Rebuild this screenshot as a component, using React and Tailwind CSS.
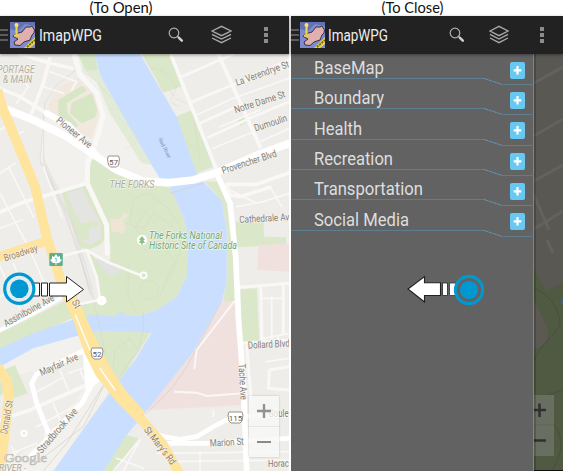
import React from "react";

const menu = [
  { label: "BaseMap", width: 70 },
  { label: "Boundary", width: 70 },
  { label: "Health", width: 48 },
  { label: "Recreation", width: 79 },
  { label: "Transportation", width: 109 },
  { label: "Social Media", width: 95 },
];

function AppIcon() {
  return (
    <svg className="h-[26px] w-[25px] shrink-0" viewBox="0 0 25 26" preserveAspectRatio="none">
      <rect width="25" height="26" fill="#7f8bd0" />
      <path d="M0 0H25V4L15 2L8 9L0 7Z" fill="#6272b4" />
      <path d="M5 23L4 20L8 17L3 14.5L5 12L12 10L16 5L20 5L22 4L24.5 8L24 11L22 13L20 18L14 20L10 23.5Z" fill="#dfb0ae" stroke="#2a2733" strokeWidth=".9" />
      <path d="M6.5 3V14" stroke="#f0d348" strokeWidth="2.2" />
      <circle cx="6.5" cy="3" r="2" fill="#ffe458" />
      <path d="M4 13.6H9" stroke="#e6cb4c" strokeWidth="2" />
      <path d="M14 26L25 15V22L20 26Z" fill="#e6d43a" />
      <path d="M17 25L25 18" stroke="#665d21" strokeWidth="1.7" strokeDasharray="2 1" />
    </svg>
  );
}

function Header({ compact }) {
  return (
    <header className="relative z-10 flex h-[38px] shrink-0 items-center bg-[#222] shadow-[0_1px_3px_#0006]">
      <div className={compact ? "flex w-[9px] flex-col gap-[3px]" : "flex w-[10px] flex-col gap-[3px]"}>
        <i className="h-[2px] w-[8px] bg-[#5c5c5c]" />
        <i className="h-[2px] w-[8px] bg-[#5c5c5c]" />
        <i className="h-[2px] w-[8px] bg-[#5c5c5c]" />
      </div>
      <AppIcon />
      <svg className={compact ? "ml-[3px] h-[30px] w-[62px] overflow-visible" : "ml-[4px] h-[30px] w-[66px] overflow-visible"}>
        <text x="0" y="21" textLength={compact ? 60 : 63} lengthAdjust="spacingAndGlyphs" fill="#eee" className="font-['Roboto',sans-serif] text-[16px]">ImapWPG</text>
      </svg>
      <svg className={compact ? "ml-[59px] h-[16px] w-[16px]" : "ml-[63px] h-[16px] w-[16px]"} viewBox="0 0 16 16" fill="none">
        <circle cx="6" cy="6" r="4.8" stroke="#b0b0b0" strokeWidth="1.2" />
        <path d="M9.3 9.2L10.8 10.6" stroke="#bdbdbd" strokeWidth="1.5" />
        <path d="M11 10.9L13.8 13.6" stroke="#cfcfcf" strokeWidth="2.6" strokeLinecap="round" />
      </svg>
      <svg className={compact ? "ml-[24px] h-[20px] w-[20px]" : "ml-[27px] h-[20px] w-[21px]"} viewBox="0 0 20 20" preserveAspectRatio="none" fill="none" stroke="#a9a9a9" strokeWidth="1.4">
        <path d="M1 6L10 1.3L19 6L10 10.7Z" />
        <path d="M1 9.3L10 14L19 9.3M1 13L10 17.7L19 13" />
      </svg>
      <div className={compact ? "ml-[31px] flex flex-col gap-[2px]" : "ml-[32px] flex flex-col gap-[2px]"}>
        <i className="h-[4px] w-[4px] bg-[#8c8c8c]" />
        <i className="h-[4px] w-[4px] bg-[#8c8c8c]" />
        <i className="h-[4px] w-[4px] bg-[#8c8c8c]" />
      </div>
    </header>
  );
}

function Label({ x, y, w, a = 0, children, size = 10, fill = "#827e7a", italic = false }) {
  return (
    <text x={x} y={y} textLength={w} lengthAdjust="spacingAndGlyphs" transform={`rotate(${a} ${x} ${y})`} fontSize={size} fill={fill} fontStyle={italic ? "italic" : "normal"} stroke="#f8f6f0" strokeWidth="1.6" strokeOpacity=".8" paintOrder="stroke" strokeLinejoin="round">{children}</text>
  );
}

function Shield({ x, y, w = 12, n }) {
  return (
    <g>
      <path d={`M${x + 1} ${y}H${x + w - 1}L${x + w} ${y + 3}L${x + w - 1} ${y + 9}L${x + w - 3} ${y + 11}H${x + 3}L${x + 1} ${y + 9}L${x} ${y + 3}Z`} fill="#fff" stroke="#8a8784" strokeWidth=".9" />
      <text x={x + w / 2} y={y + 8.5} textAnchor="middle" fontSize="8" fill="#5c5956">{n}</text>
    </g>
  );
}

function Terrain() {
  return (
    <g>
      <path d="M225 12H285L365 190L480 385L430 395L290 320L262 340V400L190 425L120 330L125 210L190 100L240 75Z" fill="#f3f1ed" />
      <path d="M0 895L230 780L330 1020L160 1263H0V1250L150 1160L270 990L250 900L110 960L0 990Z" fill="#f3f1ed" />
      <path d="M145 165L175 110L240 75L285 130L300 190L275 268L150 200Z" fill="#f1e9df" />
      <path d="M235 12H285L300 75L455 345L425 340L330 190L290 95L250 60Z" fill="#e1ebd6" />
      <path d="M235 12H285L292 60L260 62Z" fill="#d7e6c6" />
      <path d="M175 150L245 107L262 120L200 160L203 190L235 225L220 240L175 195Z M215 158L275 130L292 180L285 203L245 220L210 190Z" fill="#d7e6c4" />
      <path d="M262 400L275 330L310 320L350 355L430 400L510 412L550 500L565 560L560 680L530 740L470 780L420 797L215 810L240 765L300 752L290 680L262 600L240 590L185 430Z" fill="#dbe7c9" />
      <path d="M320 560L332 590L330 638L300 640L285 625L262 600L300 585Z" fill="#efeee9" />
      <path d="M200 430L247 415L265 455L300 515L303 565L270 585L253 575L245 525L225 490Z" fill="#e4e4e3" />
      <path d="M243 520L295 512L295 530L268 533V565L253 568Z" fill="#dbe7c9" />
      <path d="M330 505L358 508L372 490L387 492L370 515L378 535L370 550L335 543Z" fill="#efe5d6" />
      <path d="M285 625L362 645L350 678L325 675Z" fill="#e2e2e2" />
      <path d="M425 12H508L545 110L490 128L462 75Z M525 198L575 180L640 350L590 370Z" fill="#dbe7c9" />
      <path d="M490 128L545 110L575 180L527 200Z" fill="#f0eee9" />
      <path d="M615 395L655 395L690 480L705 560V755H668L680 700V540L665 450Z" fill="#dbe7c9" />
      <path d="M708 515H790L792 560L858 562V583L708 592Z M722 718L770 715L778 875L725 880Z M715 208L745 198V215L720 228Z" fill="#dbe7c9" />
      <path d="M0 850L210 745L240 795L0 900Z M270 842H455L350 1010L300 920Z M10 960L45 945L82 1030L40 1045ZM0 990L18 1018L0 1040Z M380 1155L415 1165L345 1263H300Z" fill="#dbe7c9" />
      <path d="M775 585L868 580V665L772 660Z M668 755H705L735 1065L440 1080L580 905Z" fill="#f0e1df" />
      <path d="M285 12L300 75L365 190L455 345L480 385L510 412L550 500L565 560L560 680L530 740L470 780L420 797H375L372 790L360 785L345 800L290 793L215 810L100 850L0 895V950L100 895L230 858L300 843L455 848L405 930L335 1020L160 1263H310L380 1155L435 1090L580 905L665 755L680 700V540L665 450L615 400L590 370L530 200L420 12Z" fill="#cadfff" />
    </g>
  );
}

function Paths() {
  return (
    <g fill="none" strokeWidth="2">
      <path d="M235 55L170 105L135 160L120 330L190 480L285 752M131 180V335L200 500L278 745M128 320L210 500L270 735M122 338L220 520L268 720M130 340L232 560L278 720" stroke="#dddbd8" />
      <path d="M235 55L285 90L335 145" stroke="#dedbd6" />
      <path d="M325 180C360 160 390 210 410 240C430 270 410 285 375 295M345 195L405 245L385 270" stroke="#e0ddd4" strokeDasharray="5 3" />
      <path d="M280 755L305 850L325 980M430 790V840L415 900L350 990M340 950L345 900L390 865L415 900" stroke="#cdd5c0" strokeDasharray="6 3" />
      <path d="M390 520L400 450L440 430L500 470L540 530V610L510 660L480 740M380 520L430 535L460 490L520 530M430 600L490 590L530 640L500 700M385 640V740L410 790M420 720A25 25 0 1 0 475 720A25 25 0 1 0 420 720M440 480L405 530L430 570M500 590L530 560" stroke="#ced9bf" strokeDasharray="6 3" />
      <path d="M510 430L610 400M665 755L560 950L520 1010L440 1090M320 990L200 1180L130 1263M310 1010L250 1130L120 1230" stroke="#d5cdca" />
      <path d="M450 50L500 70L530 110L510 155L540 170M580 200L600 330M555 270L590 300M510 120L525 145L560 160" stroke="#d6d5c6" strokeDasharray="5 3" />
    </g>
  );
}

function Roads() {
  return (
    <g fill="none" strokeLinejoin="round" strokeLinecap="round">
      <g stroke="#f9f8f7" strokeWidth="5">
        <path d="M50 160L85 110L60 75M150 65L230 95L215 120M130 110L190 130M0 370L45 340M0 430L90 600L150 740M25 350L100 500M0 535L65 510M0 240L30 225M45 255L70 245M130 350L185 500M0 650L60 780M40 640L85 750M0 740L40 720" />
        <path d="M590 195L700 145L868 85M660 230L780 180M640 295L760 245M780 275L868 235M720 100L868 50M710 470L790 455L868 430M690 420L770 460M810 410L845 470M785 745H850M815 740V865M790 865L868 850M835 860V880M800 935L868 925" />
        <path d="M180 960L205 1020M110 1025L185 985M110 1130L240 1060M135 1150L165 1135M160 1060L180 1110M240 960L262 1010M205 970L260 950M20 1215L110 1180M35 1190L50 1225M0 1240L60 1200M70 1230L130 1190L140 1130" />
        <path d="M410 1180L340 1263M420 1170L370 1263M470 1210L868 1205M500 1235L868 1230M600 1205V1263M640 1100V1080M350 1225L430 1255" />
      </g>
      <g stroke="#f9f8f7" strokeWidth="11">
        <path d="M0 115L60 140L140 190M150 25L130 100L95 190M60 12L150 40L215 55" />
        <path d="M222 12L240 75L290 130L310 200L280 300L262 340V400L320 525L322 610" strokeWidth="15" />
        <path d="M0 487L60 460L262 400" />
        <path d="M190 617L260 600L320 635L420 675M260 600L290 680L300 750L240 762" strokeWidth="8" />
        <path d="M515 20L650 360M655 12L780 290" />
        <path d="M545 80L700 12M570 158L720 95L868 30M600 220L720 165M625 262L760 200L868 155" strokeWidth="8" />
        <path d="M680 403H770L868 368M680 405L690 435L720 440L810 412" />
        <path d="M720 712L868 700M782 712L786 880M850 708V850M720 880L868 870M868 950L808 960L805 1015L868 1020M740 890L755 1060" strokeWidth="9" />
        <path d="M702 755L590 900L583 955M525 1025L590 1028L620 1038L730 1030" strokeWidth="6" />
        <path d="M45 1095L90 1080L260 1005M0 1110L45 1095" />
      </g>
      <g stroke="#fff">
        <path d="M140 190L205 225L290 315" strokeWidth="19" />
        <path d="M0 170L100 210L200 260L290 320L350 360L430 394L510 398L580 390L650 368L760 320L868 280" strokeWidth="23" />
        <path d="M650 370L690 460L707 620L715 800L730 1000L740 1263" strokeWidth="17" />
        <path d="M440 1140L490 1160L540 1168L590 1160L640 1130L700 1100L868 1095M470 1180H620L868 1165" strokeWidth="14" />
        <path d="M255 900L110 972L95 1000L110 1060L150 1160M285 985L245 1060L150 1160L90 1220" strokeWidth="15" />
        <path d="M250 890L300 990L260 1020Z" fill="#fff" strokeWidth="6" />
        <path d="M0 840L100 790L180 745" strokeWidth="12" />
      </g>
      <g stroke="#fee49c" strokeLinecap="butt">
        <path d="M-8 120L10 180L50 275L105 410L140 560L185 700L235 810L265 900L300 970L360 1045L430 1115L490 1185L540 1275" strokeWidth="29" />
        <path d="M195 690L242 790L285 885L330 970L375 1035L430 1095" strokeWidth="20" />
        <path d="M-5 621L130 576" strokeWidth="27" />
        <path d="M-8 950L20 990L27 1040L10 1180L2 1265" strokeWidth="30" />
      </g>
      <path d="M226 795L270 900M300 955L345 1020" stroke="#fff" strokeWidth="4" />
      <circle cx="431" cy="676" r="9" stroke="#fff" strokeWidth="5" />
      <circle cx="305" cy="752" r="8" stroke="#fff" strokeWidth="13" />
      <circle cx="72" cy="1150" r="8" stroke="#fff" strokeWidth="6" />
    </g>
  );
}

function CityMap() {
  return (
    <svg className="block h-[417px] w-[289px] font-['Roboto',sans-serif]" viewBox="0 54 289 417">
      <rect y="54" width="289" height="417" fill="#eeede9" />
      <g transform="translate(0 50) scale(.33333)">
        <Terrain />
        <Paths />
        <Roads />
      </g>

      <Label x={-3} y={72.5} w={38} italic fill="#b3ada0">PORTAGE</Label>
      <Label x={3} y={82.8} w={29} italic fill="#b3ada0">&amp; MAIN</Label>
      <Label x={55.5} y={121.5} w={43} a={39}>Pioneer Ave</Label>
      <Label x={109.5} y={188} w={45} italic size={10} fill="#b1ac9c">THE FORKS</Label>
      <Label x={149} y={238.8} w={73} italic fill="#6dab76">The Forks National</Label>
      <Label x={149} y={249.2} w={88} italic fill="#6dab76">Historic Site of Canada</Label>
      <circle cx="142" cy="240" r="5.2" fill="white" />
      <path d="M142 236L145 240H143.4L145 243H142.8V244.5H141.2V243H139L140.6 240H139Z" fill="#8cbf83" />
      <text x="158" y="139" transform="rotate(63 158 139)" fontSize="5.5" textLength="22" fill="#8293b5">Red River</text>
      <Label x={237} y={86} w={56} a={-20}>La Verendrye St</Label>
      <Label x={235.5} y={113.3} w={53} a={-18}>Notre Dame St</Label>
      <Label x={255.5} y={131.5} w={34} a={-18}>Dumoulin</Label>
      <Label x={223} y={174} w={57} a={-18}>Provencher Blvd</Label>
      <Label x={239.5} y={223} w={50} a={-3}>Cathedrale Av</Label>
      <Label x={248} y={348.8} w={42} a={-3}>Dollard Blvd</Label>
      <Label x={5} y={261.5} w={35} a={-18} fill="#9b8564">Broadway</Label>
      <Label x={6} y={327} w={56} a={-29}>Assiniboine Ave</Label>
      <Label x={41.5} y={376} w={41} a={-24}>Mayfair Ave</Label>
      <Label x={41.5} y={454} w={56} a={-49}>Stradbrook Ave</Label>
      <Label x={7} y={434.5} w={34} a={-80} fill="#9b8564">Donald St</Label>
      <Label x={71.5} y={301.5} w={9} a={64} fill="#9b8564">St</Label>
      <Label x={143.5} y={430} w={45} a={52} fill="#8f7c5e">St Mary's Rd</Label>
      <Label x={238.5} y={364} w={36} a={87}>Tache Ave</Label>
      <Label x={210} y={446.5} w={34} a={-3}>Marion St</Label>
      <Label x={268.5} y={417} w={20}>Goule</Label>
      <Label x={268} y={467} w={21} a={-1}>Horac</Label>
      <Shield x={107.5} y={156} n="57" />
      <Shield x={91} y={348} n="52" />
      <Shield x={228} y={412} w={15} n="115" />
      <rect x="49.3" y="253" width="13.5" height="13" rx="1" fill="#5fae92" />
      <path d="M56 254L58 257L60 256V259L62 260L59 263H56.5V265H55.5V263H53L50 260L52 259V256L54 257Z" fill="white" />
      <text x="56" y="262" textAnchor="middle" fontSize="6" fill="#4d987b">1</text>
      <text x="4" y="461.5" textLength="43" lengthAdjust="spacingAndGlyphs" fontSize="13.5" fontFamily="Liberation Serif, serif" fill="#eeeeeb" stroke="#bdbbb7" strokeWidth=".7">Google</text>
      <Label x={-1} y={470.5} w={27} italic size={9.5} fill="#aaa296">RIVER -</Label>
    </svg>
  );
}

function SwipeRight() {
  return (
    <svg className="absolute left-[2px] top-[271px] h-[36px] w-[84px]" viewBox="2 271 84 36">
      <path d="M32 283H39.5V296H32ZM41.5 283H47.5V296H41.5ZM49.5 283H66.5V276.5L83.5 289.5L66.5 302V296H49.5Z" fill="white" stroke="#222" strokeWidth="1" />
      <circle cx="19.3" cy="288.8" r="14.6" fill="#e4eef0" stroke="#0098d0" strokeWidth="3.2" />
      <circle cx="19.3" cy="288.8" r="9.3" fill="#0098d0" />
    </svg>
  );
}

function SwipeLeft() {
  return (
    <svg className="absolute left-[115px] top-[272px] h-[36px] w-[80px]" viewBox="406 272 80 36">
      <path d="M408 289L424.5 276.5V282.7H440.5V295.5H424.5V302Z" fill="white" stroke="#222" strokeWidth="1.1" />
      <path d="M442.5 283H447.5V295.5H442.5Z" fill="white" stroke="#222" strokeWidth=".8" />
      <path d="M449.5 283H456V295.5H449.5Z" fill="white" stroke="#333" strokeWidth=".8" />
      <circle cx="469" cy="290" r="13.6" fill="#626262" stroke="#0098d0" strokeWidth="3.1" />
      <circle cx="469" cy="290" r="9.1" fill="#0098d0" />
    </svg>
  );
}

function MenuRow({ label, width }) {
  return (
    <div className="relative flex h-[30.35px] shrink-0 justify-between pl-[23px] pr-[8px]">
      <svg className="absolute left-0 top-[23px] h-[9px] w-[243px]" viewBox="0 0 243 9" fill="none">
        <path d="M0 1.5H193" stroke="#5c7e90" />
        <path d="M193 1.5L210 7" stroke="#66a0bd" strokeDasharray="2 .7" />
        <path d="M210 7.5H243" stroke="#607d8e" />
      </svg>
      <svg className="h-[25px] w-[130px] overflow-visible">
        <text x="0" y="19.7" textLength={width} lengthAdjust="spacingAndGlyphs" fill="#dedede" className="font-['Roboto',sans-serif] text-[18px]">{label}</text>
      </svg>
      <svg className="mt-[7.5px] h-[17px] w-[15px]" viewBox="0 0 15 17" preserveAspectRatio="none">
        <rect width="15" height="17" rx="2" fill="#67c9f1" />
        <path d="M7.5 4V12.6M3.7 8.3H11.3" stroke="white" strokeWidth="2.2" />
      </svg>
    </div>
  );
}

function ZoomControl() {
  return (
    <div className="absolute left-[249px] top-[396px] flex h-[61px] w-[30px] flex-col bg-[#f7f7f6]/80 shadow-[0_0_2px_#0003]">
      <span className="grid h-[30.5px] place-items-center border-b border-[#e7e6e4]">
        <svg className="h-[14px] w-[14px]" viewBox="0 0 14 14"><path d="M7 0V14M0 7H14" stroke="#929292" strokeWidth="2.4" /></svg>
      </span>
      <span className="grid h-[30.5px] place-items-center">
        <i className="h-[2px] w-[14px] bg-[#898989]" />
      </span>
    </div>
  );
}

function DimMap() {
  return (
    <svg className="h-[417px] w-[29px] shrink-0" viewBox="534 54 29 417">
      <rect x="534" y="54" width="29" height="417" fill="#5a5853" />
      <path d="M534 268L546 291L563 282V471H534Z" fill="#505941" />
      <path d="M534 300L548 329L547 340L542 346L534 350Z" fill="#5b5952" />
      <path d="M534 83L563 67M534 136L563 119M534 181L563 165M534 195L549 230M534 229L563 211M547 240L553 253" stroke="#64625e" strokeWidth="3" />
      <path d="M534 288C548 294 560 308 560 325C555 335 540 345 534 361M534 408C541 394 551 395 563 390M552 471C564 452 563 437 554 424" fill="none" stroke="#475039" />
      <path d="M563 298V304C561 304 561 300 563 298Z" fill="#45618e" />
      <path d="M534 395H554V456H534Z" fill="#686e60" />
      <path d="M534 425H554" stroke="#606657" />
      <path d="M534 410H546M539.5 403.5V417M534 440.5H546" stroke="#303030" strokeWidth="2.5" />
      <path d="M534 470.5H563" stroke="#101010" />
      <rect x="534" y="54" width="2" height="417" fill="#000" opacity=".18" />
    </svg>
  );
}

export default function App() {
  return (
    <main className="flex h-[471px] w-[563px] gap-[2px] overflow-hidden bg-white">
      <section className="relative flex w-[289px] shrink-0 flex-col">
        <div className="h-[16px]">
          <svg className="block h-[18px] w-full overflow-visible">
            <text x="89.5" y="13" textLength="63" lengthAdjust="spacingAndGlyphs" fill="#111" className="font-['Lato',sans-serif] text-[14.5px]">(To Open)</text>
          </svg>
        </div>
        <Header />
        <CityMap />
        <ZoomControl />
        <SwipeRight />
      </section>
      <section className="relative flex w-[272px] shrink-0 flex-col">
        <div className="h-[16px]">
          <svg className="block h-[18px] w-full overflow-visible">
            <text x="90.5" y="13" textLength="62" lengthAdjust="spacingAndGlyphs" fill="#111" className="font-['Lato',sans-serif] text-[14.5px]">(To Close)</text>
          </svg>
        </div>
        <Header compact />
        <div className="flex h-[417px]">
          <nav className="flex w-[243px] shrink-0 flex-col border-r border-[#858585] bg-[#626262]">
            {menu.map((item) => <MenuRow key={item.label} {...item} />)}
          </nav>
          <DimMap />
        </div>
        <SwipeLeft />
      </section>
    </main>
  );
}
